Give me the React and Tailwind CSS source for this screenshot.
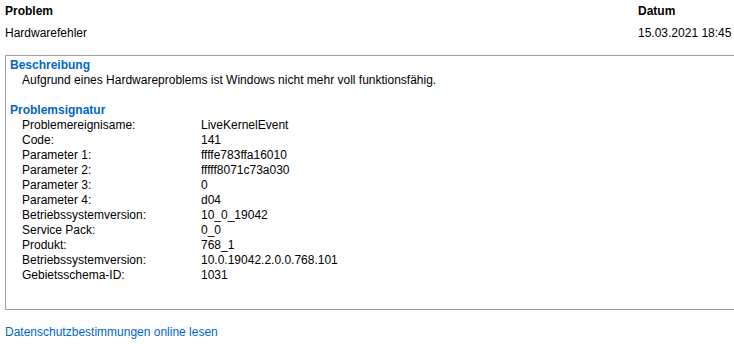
const rows = [
  ['Problemereignisame:', 'LiveKernelEvent'],
  ['Code:', '141'],
  ['Parameter 1:', 'ffffe783ffa16010'],
  ['Parameter 2:', 'fffff8071c73a030'],
  ['Parameter 3:', '0'],
  ['Parameter 4:', 'd04'],
  ['Betriebssystemversion:', '10_0_19042'],
  ['Service Pack:', '0_0'],
  ['Produkt:', '768_1'],
  ['Betriebssystemversion:', '10.0.19042.2.0.0.768.101'],
  ['Gebietsschema-ID:', '1031'],
]

export default function App() {
  return (
    <div className="h-[359px] w-[734px] overflow-hidden bg-white font-['Liberation_Sans',Arial,sans-serif] text-[12px] leading-[15px] text-black">
      <div className="flex pl-[5px] pt-[4px]">
        <div className="w-[633px]">
          <div className="font-bold">Problem</div>
          <div className="mt-[7px]">Hardwarefehler</div>
        </div>
        <div>
          <div className="font-bold">Datum</div>
          <div className="mt-[7px]">15.03.2021 18:45</div>
        </div>
      </div>

      <div className="ml-[5px] mt-[14px] h-[255px] w-[740px] border border-[#a0a0a0] pl-[4px] pt-[2px]">
        <div className="font-bold text-[#0066cc]">Beschreibung</div>
        <div className="pl-[12px]">Aufgrund eines Hardwareproblems ist Windows nicht mehr voll funktionsfähig.</div>

        <div className="mt-[15px] font-bold text-[#0066cc]">Problemsignatur</div>
        <div className="pl-[12px]">
          {rows.map(([k, v], i) => (
            <div key={i} className="flex">
              <span className="w-[179px]">{k}</span>
              <span>{v}</span>
            </div>
          ))}
        </div>
      </div>

      <a href="#" className="ml-[5px] mt-[15px] block text-[#0066cc]">
        Datenschutzbestimmungen online lesen
      </a>
    </div>
  )
}
